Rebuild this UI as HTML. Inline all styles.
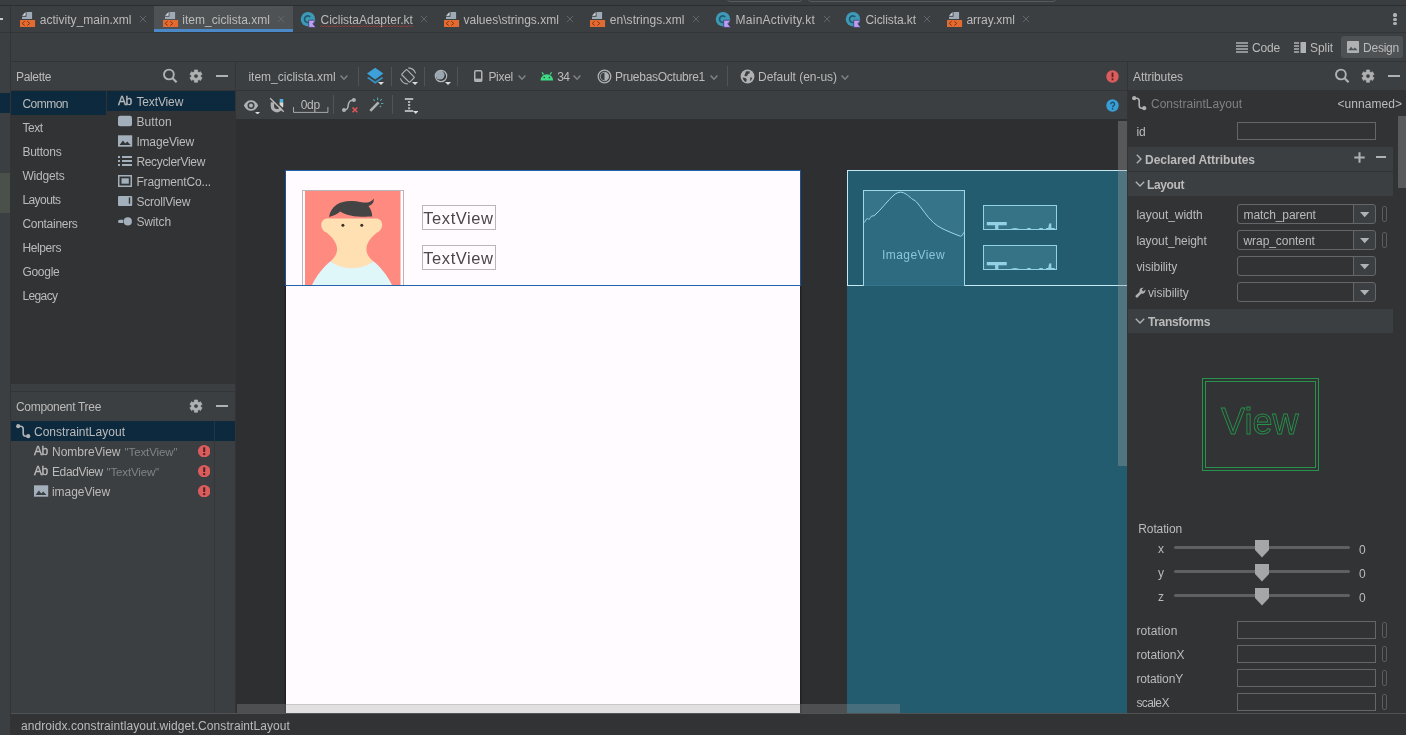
<!DOCTYPE html>
<html lang="en"><head><meta charset="utf-8"><title>item_ciclista.xml</title><style>
html{margin:0;padding:0;background:#3c3f41;}
body{margin:0;padding:0;will-change:transform;}
body{width:1406px;height:735px;position:relative;overflow:hidden;font-family:'Liberation Sans',sans-serif;}
body>div,body>svg,body>span{position:absolute;display:block;}
.t{white-space:pre;}
</style></head><body>
<div style="left:0px;top:0px;width:1406px;height:5px;background:#3a3d3f;"></div>
<div style="left:727px;top:-10px;width:73px;height:10px;border:1px solid #585b5d;background:transparent;border-radius:3px"></div>
<div style="left:808px;top:-10px;width:246px;height:10px;border:1px solid #585b5d;background:transparent;border-radius:3px"></div>
<div style="left:0px;top:5px;width:1406px;height:1px;background:#2b2d2e;"></div>
<div style="left:0px;top:6px;width:1406px;height:26px;background:#3c3f41;"></div>
<div style="left:0px;top:32px;width:1406px;height:1px;background:#323436;"></div>
<div style="left:11px;top:33px;width:1395px;height:28px;background:#3c3f41;"></div>
<div style="left:11px;top:61px;width:1395px;height:1px;background:#323436;"></div>
<div style="left:0px;top:33px;width:10px;height:702px;background:#3c3f41;"></div>
<div style="left:10px;top:6px;width:1px;height:729px;background:#323436;"></div>
<div style="left:0px;top:93px;width:10px;height:20px;background:#0d293e;"></div>
<div style="left:0px;top:173px;width:10px;height:40px;background:#49514a;"></div>
<div style="left:154px;top:6px;width:139px;height:26px;background:#4e5254;"></div>
<div style="left:154px;top:29px;width:139px;height:3px;background:#4a88c7;"></div>
<svg style="left:20px;top:11px;" width="16" height="16" viewBox="0 0 16 16"><path d="M6.500 1.100h5.600V7.900H2V5.700H6.500z" fill="#9eaab5"/><path d="M5.600 1.100v3.700H2z" fill="#d3d8dc"/><rect x="0" y="9" width="15.100" height="7" fill="#e16b30"/><path d="M4.700 10.300L2.200 12.400l2.500 2.100M7.300 10.300l2.500 2.100-2.500 2.100" stroke="#8a2f0d" stroke-width="1" fill="none"/></svg>
<span class="t" style="left:39.8px;top:13.34px;font-size:12px;line-height:15px;color:#bbbbbb;letter-spacing:0.020px;">activity_main.xml</span>
<svg style="left:139px;top:15px;" width="8" height="8" viewBox="0 0 8 8"><path d="M.8 .8l6.4 6.4M7.2 .8L.8 7.2" stroke="#63676a" stroke-width="1" fill="none"/></svg>
<svg style="left:163px;top:11px;" width="16" height="16" viewBox="0 0 16 16"><path d="M6.500 1.100h5.600V7.900H2V5.700H6.500z" fill="#9eaab5"/><path d="M5.600 1.100v3.700H2z" fill="#d3d8dc"/><rect x="0" y="9" width="15.100" height="7" fill="#e16b30"/><path d="M4.700 10.300L2.200 12.400l2.500 2.100M7.300 10.300l2.500 2.100-2.500 2.100" stroke="#8a2f0d" stroke-width="1" fill="none"/></svg>
<span class="t" style="left:182.2px;top:13.34px;font-size:12px;line-height:15px;color:#bbbbbb;letter-spacing:0.026px;">item_ciclista.xml</span>
<svg style="left:277px;top:15px;" width="8" height="8" viewBox="0 0 8 8"><path d="M.8 .8l6.4 6.4M7.2 .8L.8 7.2" stroke="#63676a" stroke-width="1" fill="none"/></svg>
<svg style="left:300px;top:11.6px;" width="17" height="17" viewBox="0 0 17 17"><circle cx="8" cy="7.200" r="7.200" fill="#3e9bb8"/><path d="M10.300 5A3.300 3.300 0 1 0 10.300 9.400" stroke="#215a70" stroke-width="1.700" fill="none"/><path d="M8.700 8.200h7.200l-3.100 3.600 3.100 3.600H8.700z" fill="#bd9cfa" stroke="#343a52" stroke-width=".7"/></svg>
<span class="t" style="left:320.5px;top:13.34px;font-size:12px;line-height:15px;color:#bbbbbb;letter-spacing:-0.018px;">CiclistaAdapter.kt</span>
<svg style="left:420px;top:15px;" width="8" height="8" viewBox="0 0 8 8"><path d="M.8 .8l6.4 6.4M7.2 .8L.8 7.2" stroke="#63676a" stroke-width="1" fill="none"/></svg>
<svg style="left:443.7px;top:11px;" width="16" height="16" viewBox="0 0 16 16"><path d="M6.500 1.100h5.600V7.900H2V5.700H6.500z" fill="#9eaab5"/><path d="M5.600 1.100v3.700H2z" fill="#d3d8dc"/><rect x="0" y="9" width="15.100" height="7" fill="#e16b30"/><path d="M4.700 10.300L2.200 12.400l2.500 2.100M7.300 10.300l2.500 2.100-2.500 2.100" stroke="#8a2f0d" stroke-width="1" fill="none"/></svg>
<span class="t" style="left:463.5px;top:13.34px;font-size:12px;line-height:15px;color:#bbbbbb;letter-spacing:-0.004px;">values\strings.xml</span>
<svg style="left:566px;top:15px;" width="8" height="8" viewBox="0 0 8 8"><path d="M.8 .8l6.4 6.4M7.2 .8L.8 7.2" stroke="#63676a" stroke-width="1" fill="none"/></svg>
<svg style="left:589.5px;top:11px;" width="16" height="16" viewBox="0 0 16 16"><path d="M6.500 1.100h5.600V7.900H2V5.700H6.500z" fill="#9eaab5"/><path d="M5.600 1.100v3.700H2z" fill="#d3d8dc"/><rect x="0" y="9" width="15.100" height="7" fill="#e16b30"/><path d="M4.700 10.300L2.200 12.400l2.500 2.100M7.300 10.300l2.500 2.100-2.500 2.100" stroke="#8a2f0d" stroke-width="1" fill="none"/></svg>
<span class="t" style="left:609.8px;top:13.34px;font-size:12px;line-height:15px;color:#bbbbbb;letter-spacing:0.041px;">en\strings.xml</span>
<svg style="left:692px;top:15px;" width="8" height="8" viewBox="0 0 8 8"><path d="M.8 .8l6.4 6.4M7.2 .8L.8 7.2" stroke="#63676a" stroke-width="1" fill="none"/></svg>
<svg style="left:715px;top:11.6px;" width="17" height="17" viewBox="0 0 17 17"><circle cx="8" cy="7.200" r="7.200" fill="#3e9bb8"/><path d="M10.300 5A3.300 3.300 0 1 0 10.300 9.400" stroke="#215a70" stroke-width="1.700" fill="none"/><path d="M8.700 8.200h7.200l-3.100 3.600 3.100 3.600H8.700z" fill="#bd9cfa" stroke="#343a52" stroke-width=".7"/></svg>
<span class="t" style="left:735.6px;top:13.34px;font-size:12px;line-height:15px;color:#bbbbbb;letter-spacing:0.240px;">MainActivity.kt</span>
<svg style="left:822.5px;top:15px;" width="8" height="8" viewBox="0 0 8 8"><path d="M.8 .8l6.4 6.4M7.2 .8L.8 7.2" stroke="#63676a" stroke-width="1" fill="none"/></svg>
<svg style="left:845px;top:11.6px;" width="17" height="17" viewBox="0 0 17 17"><circle cx="8" cy="7.200" r="7.200" fill="#3e9bb8"/><path d="M10.300 5A3.300 3.300 0 1 0 10.300 9.400" stroke="#215a70" stroke-width="1.700" fill="none"/><path d="M8.700 8.200h7.200l-3.100 3.600 3.100 3.600H8.700z" fill="#bd9cfa" stroke="#343a52" stroke-width=".7"/></svg>
<span class="t" style="left:865.5px;top:13.34px;font-size:12px;line-height:15px;color:#bbbbbb;letter-spacing:-0.077px;">Ciclista.kt</span>
<svg style="left:923px;top:15px;" width="8" height="8" viewBox="0 0 8 8"><path d="M.8 .8l6.4 6.4M7.2 .8L.8 7.2" stroke="#63676a" stroke-width="1" fill="none"/></svg>
<svg style="left:947px;top:11px;" width="16" height="16" viewBox="0 0 16 16"><path d="M6.500 1.100h5.600V7.900H2V5.700H6.500z" fill="#9eaab5"/><path d="M5.600 1.100v3.700H2z" fill="#d3d8dc"/><rect x="0" y="9" width="15.100" height="7" fill="#e16b30"/><path d="M4.700 10.300L2.200 12.400l2.500 2.100M7.300 10.300l2.500 2.100-2.500 2.100" stroke="#8a2f0d" stroke-width="1" fill="none"/></svg>
<span class="t" style="left:966.4px;top:13.34px;font-size:12px;line-height:15px;color:#bbbbbb;letter-spacing:0.016px;">array.xml</span>
<svg style="left:1022px;top:15px;" width="8" height="8" viewBox="0 0 8 8"><path d="M.8 .8l6.4 6.4M7.2 .8L.8 7.2" stroke="#63676a" stroke-width="1" fill="none"/></svg>
<svg style="left:320px;top:25px;" width="94" height="4" viewBox="0 0 94 4"><path d="M0 2 l1.5 -1.5 l1.5 1.5 l1.5 -1.5 l1.5 1.5 l1.5 -1.5 l1.5 1.5 l1.5 -1.5 l1.5 1.5 l1.5 -1.5 l1.5 1.5 l1.5 -1.5 l1.5 1.5 l1.5 -1.5 l1.5 1.5 l1.5 -1.5 l1.5 1.5 l1.5 -1.5 l1.5 1.5 l1.5 -1.5 l1.5 1.5 l1.5 -1.5 l1.5 1.5 l1.5 -1.5 l1.5 1.5 l1.5 -1.5 l1.5 1.5 l1.5 -1.5 l1.5 1.5 l1.5 -1.5 l1.5 1.5 l1.5 -1.5 l1.5 1.5 l1.5 -1.5 l1.5 1.5 l1.5 -1.5 l1.5 1.5 l1.5 -1.5 l1.5 1.5 l1.5 -1.5 l1.5 1.5 l1.5 -1.5 l1.5 1.5 l1.5 -1.5 l1.5 1.5 l1.5 -1.5 l1.5 1.5 l1.5 -1.5 l1.5 1.5 l1.5 -1.5 l1.5 1.5 l1.5 -1.5 l1.5 1.5 l1.5 -1.5 l1.5 1.5 l1.5 -1.5 l1.5 1.5 l1.5 -1.5 l1.5 1.5 l1.5 -1.5 l1.5 1.5 l1.5 -1.5 l1.5 1.5" stroke="#a03c38" stroke-width=".8" fill="none"/></svg>
<div style="left:0px;top:18px;width:3px;height:2px;background:#c8c8c8;"></div>
<div style="left:1393.4px;top:13.4px;width:3.2px;height:3.2px;background:#afb1b3;border-radius:50%"></div>
<div style="left:1393.4px;top:17.85px;width:3.2px;height:3.2px;background:#afb1b3;border-radius:50%"></div>
<div style="left:1393.4px;top:22.3px;width:3.2px;height:3.2px;background:#afb1b3;border-radius:50%"></div>
<div style="left:1341px;top:36px;width:62px;height:22px;background:#4e5254;border-radius:3px"></div>
<svg style="left:1236px;top:42px;" width="13" height="12" viewBox="0 0 13 12"><path d="M0 1h12M0 4h12M0 7h12M0 10h12" stroke="#afb1b3" stroke-width="1.6"/></svg>
<span class="t" style="left:1252px;top:41.34px;font-size:12px;line-height:15px;color:#bbbbbb;letter-spacing:-0.172px;">Code</span>
<svg style="left:1294px;top:42px;" width="12" height="12" viewBox="0 0 12 12"><path d="M0 1h5M0 4h5M0 7h5M0 10h5" stroke="#afb1b3" stroke-width="1.6"/><rect x="6.5" y="0" width="5.5" height="11" fill="#afb1b3"/></svg>
<span class="t" style="left:1310px;top:41.34px;font-size:12px;line-height:15px;color:#bbbbbb;letter-spacing:-0.069px;">Split</span>
<svg style="left:1347px;top:41px;" width="13" height="13" viewBox="0 0 13 13"><rect x="0" y="0" width="12" height="12" rx=".8" fill="#afb1b3"/><path d="M1.300 9.300l2.800-3.600 2 2.500 1.700-1.700 2.900 2.800z" fill="#4e5254"/></svg>
<span class="t" style="left:1363px;top:41.34px;font-size:12px;line-height:15px;color:#bbbbbb;letter-spacing:-0.227px;">Design</span>
<div style="left:11px;top:62px;width:224px;height:28px;background:#3c3f41;"></div>
<div style="left:11px;top:90px;width:224px;height:1px;background:#323436;"></div>
<div style="left:235px;top:62px;width:1px;height:651px;background:#323436;"></div>
<span class="t" style="left:16px;top:70.34px;font-size:12px;line-height:15px;color:#bbbbbb;letter-spacing:-0.337px;">Palette</span>
<svg style="left:162px;top:68px;" width="16" height="16" viewBox="0 0 16 16"><circle cx="6.900" cy="6.500" r="4.900" stroke="#afb1b3" stroke-width="1.900" fill="none"/><path d="M10.400 10l4.200 4.200" stroke="#afb1b3" stroke-width="2.200"/></svg>
<svg style="left:188px;top:68px;" width="16" height="17" viewBox="0 0 16 17"><path d="M6.37 2.01 L9.63 2.01 L9.45 3.63 L11.14 4.61 L12.45 3.65 L14.09 6.47 L12.60 7.12 L12.60 9.08 L14.09 9.73 L12.45 12.55 L11.14 11.59 L9.45 12.57 L9.63 14.19 L6.37 14.19 L6.55 12.57 L4.86 11.59 L3.55 12.55 L1.91 9.73 L3.40 9.08 L3.40 7.12 L1.91 6.47 L3.55 3.65 L4.86 4.61 L6.55 3.63Z M8 5.900a2.200 2.200 0 1 0 .001 0z" fill="#afb1b3" fill-rule="evenodd" stroke="#afb1b3" stroke-width=".7" stroke-linejoin="round"/></svg>
<div style="left:216px;top:74.5px;width:12px;height:2.5px;background:#afb1b3;"></div>
<div style="left:11px;top:91px;width:224px;height:293px;background:#313335;"></div>
<div style="left:11px;top:91px;width:95px;height:23.5px;background:#0d293e;"></div>
<div style="left:107px;top:91px;width:128px;height:20px;background:#0d293e;"></div>
<span class="t" style="left:22.4px;top:97.34px;font-size:12px;line-height:15px;color:#bbbbbb;letter-spacing:-0.515px;">Common</span>
<span class="t" style="left:22.4px;top:121.34px;font-size:12px;line-height:15px;color:#bbbbbb;letter-spacing:-0.404px;">Text</span>
<span class="t" style="left:22.4px;top:145.34px;font-size:12px;line-height:15px;color:#bbbbbb;letter-spacing:-0.229px;">Buttons</span>
<span class="t" style="left:22.4px;top:169.34px;font-size:12px;line-height:15px;color:#bbbbbb;letter-spacing:-0.180px;">Widgets</span>
<span class="t" style="left:22.4px;top:193.34px;font-size:12px;line-height:15px;color:#bbbbbb;letter-spacing:-0.562px;">Layouts</span>
<span class="t" style="left:22.4px;top:217.34px;font-size:12px;line-height:15px;color:#bbbbbb;letter-spacing:-0.283px;">Containers</span>
<span class="t" style="left:22.4px;top:241.34px;font-size:12px;line-height:15px;color:#bbbbbb;letter-spacing:-0.394px;">Helpers</span>
<span class="t" style="left:22.4px;top:265.34px;font-size:12px;line-height:15px;color:#bbbbbb;letter-spacing:-0.267px;">Google</span>
<span class="t" style="left:22.4px;top:289.34px;font-size:12px;line-height:15px;color:#bbbbbb;letter-spacing:-0.600px;">Legacy</span>
<span class="t" style="left:136.4px;top:95.34px;font-size:12px;line-height:15px;color:#bbbbbb;letter-spacing:-0.127px;">TextView</span>
<span class="t" style="left:136.4px;top:115.34px;font-size:12px;line-height:15px;color:#bbbbbb;letter-spacing:0.099px;">Button</span>
<span class="t" style="left:136.4px;top:135.34px;font-size:12px;line-height:15px;color:#bbbbbb;letter-spacing:-0.173px;">ImageView</span>
<span class="t" style="left:136.4px;top:155.34px;font-size:12px;line-height:15px;color:#bbbbbb;letter-spacing:-0.322px;">RecyclerView</span>
<span class="t" style="left:136.4px;top:175.34px;font-size:12px;line-height:15px;color:#bbbbbb;letter-spacing:-0.162px;">FragmentCo...</span>
<span class="t" style="left:136.4px;top:195.34px;font-size:12px;line-height:15px;color:#bbbbbb;letter-spacing:-0.191px;">ScrollView</span>
<span class="t" style="left:136.4px;top:215.34px;font-size:12px;line-height:15px;color:#bbbbbb;letter-spacing:-0.124px;">Switch</span>
<span class="t" style="left:118px;top:94.34px;font-size:12px;line-height:15px;color:#bbbbbb;letter-spacing:-0.444px;-webkit-text-stroke:.35px #bbbbbb;">Ab</span>
<svg style="left:118px;top:115px;" width="14" height="12" viewBox="0 0 14 12"><rect x="0" y=".8" width="14" height="10.400" rx="2" fill="#a3b0bb"/></svg>
<svg style="left:118px;top:135px;" width="15" height="12" viewBox="0 0 15 12"><rect x="0" y=".3" width="14.200" height="11.400" fill="#a3b0bb"/><path d="M1.600 10.100l3.300-4.600 2.400 3 1.900-2 3.400 3.600z" fill="#313335"/></svg>
<svg style="left:118px;top:155px;" width="14" height="12" viewBox="0 0 14 12"><path d="M0 2h2M0 6h2M0 10h2" stroke="#a3b0bb" stroke-width="1.8"/><path d="M4 2h10M4 6h10M4 10h10" stroke="#a3b0bb" stroke-width="1.8"/></svg>
<svg style="left:118px;top:175px;" width="14" height="12" viewBox="0 0 14 12"><rect x=".75" y=".75" width="12.5" height="10.5" fill="none" stroke="#a3b0bb" stroke-width="1.5"/><rect x="3.500" y="3.300" width="7.300" height="5.400" fill="#a3b0bb"/></svg>
<svg style="left:118px;top:195px;" width="15" height="12" viewBox="0 0 15 12"><rect x="0" y="1" width="14.200" height="10" rx="1" fill="#a3b0bb"/><rect x="10.800" y="2.400" width="1.400" height="6.400" fill="#313335"/></svg>
<svg style="left:118px;top:215px;" width="15" height="13" viewBox="0 0 15 13"><rect x="0" y="4.700" width="7" height="3.400" rx="1.700" fill="#a3b0bb"/><circle cx="9.800" cy="6.400" r="4.700" fill="#313335"/><circle cx="9.800" cy="6.400" r="4.100" fill="#a3b0bb"/></svg>
<div style="left:11px;top:384px;width:224px;height:8px;background:#3c3f41;"></div>
<div style="left:11px;top:391px;width:224px;height:1px;background:#323436;"></div>
<div style="left:11px;top:392px;width:224px;height:28px;background:#3c3f41;"></div>
<span class="t" style="left:16px;top:400.34px;font-size:12px;line-height:15px;color:#bbbbbb;letter-spacing:-0.314px;">Component Tree</span>
<svg style="left:188px;top:398px;" width="16" height="17" viewBox="0 0 16 17"><path d="M6.37 2.01 L9.63 2.01 L9.45 3.63 L11.14 4.61 L12.45 3.65 L14.09 6.47 L12.60 7.12 L12.60 9.08 L14.09 9.73 L12.45 12.55 L11.14 11.59 L9.45 12.57 L9.63 14.19 L6.37 14.19 L6.55 12.57 L4.86 11.59 L3.55 12.55 L1.91 9.73 L3.40 9.08 L3.40 7.12 L1.91 6.47 L3.55 3.65 L4.86 4.61 L6.55 3.63Z M8 5.900a2.200 2.200 0 1 0 .001 0z" fill="#afb1b3" fill-rule="evenodd" stroke="#afb1b3" stroke-width=".7" stroke-linejoin="round"/></svg>
<div style="left:216px;top:404.5px;width:12px;height:2.5px;background:#afb1b3;"></div>
<div style="left:11px;top:420px;width:224px;height:293px;background:#3c3f41;"></div>
<div style="left:11px;top:421px;width:224px;height:20px;background:#0d293e;"></div>
<div style="left:214px;top:441px;width:1px;height:272px;background:#343638;"></div>
<div style="left:214px;top:421px;width:1px;height:20px;background:#1d3547;"></div>
<svg style="left:15px;top:423px;" width="16" height="16" viewBox="0 0 16 16"><path d="M3.200 3.200h2.300q2.700 0 2.700 2.700v4.600q0 2.700 2.700 2.700h2" stroke="#afb1b3" stroke-width="1.600" fill="none"/><circle cx="3.200" cy="3.200" r="2.100" fill="#afb1b3"/><circle cx="13.200" cy="13.200" r="2.100" fill="#afb1b3"/></svg>
<span class="t" style="left:34px;top:425.34px;font-size:12px;line-height:15px;color:#bbbbbb;letter-spacing:0.017px;">ConstraintLayout</span>
<span class="t" style="left:34px;top:444.34px;font-size:12px;line-height:15px;color:#bbbbbb;letter-spacing:-0.444px;-webkit-text-stroke:.35px #bbbbbb;">Ab</span>
<span class="t" style="left:52px;top:445.34px;font-size:12px;line-height:15px;color:#bbbbbb;letter-spacing:0.002px;">NombreView</span>
<span class="t" style="left:124.5px;top:445.02px;font-size:11.5px;line-height:14px;color:#808386;letter-spacing:-0.098px;">&quot;TextView&quot;</span>
<span class="t" style="left:34px;top:464.34px;font-size:12px;line-height:15px;color:#bbbbbb;letter-spacing:-0.444px;-webkit-text-stroke:.35px #bbbbbb;">Ab</span>
<span class="t" style="left:52px;top:465.34px;font-size:12px;line-height:15px;color:#bbbbbb;letter-spacing:-0.379px;">EdadView</span>
<span class="t" style="left:106.5px;top:465.02px;font-size:11.5px;line-height:14px;color:#808386;letter-spacing:-0.148px;">&quot;TextView&quot;</span>
<svg style="left:34px;top:485px;" width="15" height="12" viewBox="0 0 15 12"><rect x="0" y=".3" width="14.200" height="11.400" fill="#a3b0bb"/><path d="M1.600 10.100l3.300-4.600 2.400 3 1.900-2 3.400 3.600z" fill="#3c3f41"/></svg>
<span class="t" style="left:52px;top:485.34px;font-size:12px;line-height:15px;color:#bbbbbb;letter-spacing:-0.054px;">imageView</span>
<svg style="left:197.8px;top:445.0px;" width="12.4" height="12.4" viewBox="0 0 12.4 12.4"><circle cx="6.2" cy="6.2" r="6.2" fill="#db5c5c"/><rect x="5.2" y="2.3000000000000003" width="2" height="4.700" fill="#4a2323"/><rect x="5.2" y="8.1" width="2" height="2" fill="#4a2323"/></svg>
<svg style="left:197.8px;top:465.0px;" width="12.4" height="12.4" viewBox="0 0 12.4 12.4"><circle cx="6.2" cy="6.2" r="6.2" fill="#db5c5c"/><rect x="5.2" y="2.3000000000000003" width="2" height="4.700" fill="#4a2323"/><rect x="5.2" y="8.1" width="2" height="2" fill="#4a2323"/></svg>
<svg style="left:197.8px;top:485.0px;" width="12.4" height="12.4" viewBox="0 0 12.4 12.4"><circle cx="6.2" cy="6.2" r="6.2" fill="#db5c5c"/><rect x="5.2" y="2.3000000000000003" width="2" height="4.700" fill="#4a2323"/><rect x="5.2" y="8.1" width="2" height="2" fill="#4a2323"/></svg>
<div style="left:236px;top:62px;width:891px;height:28px;background:#3c3f41;"></div>
<div style="left:236px;top:90px;width:891px;height:1px;background:#323436;"></div>
<div style="left:236px;top:91px;width:891px;height:28px;background:#3c3f41;"></div>
<span class="t" style="left:248.4px;top:70.34px;font-size:12px;line-height:15px;color:#bbbbbb;letter-spacing:0.002px;">item_ciclista.xml</span>
<svg style="left:340px;top:74.6px;" width="8" height="6" viewBox="0 0 8 6"><path d="M.6 .6L4 4.200 7.400 .6" stroke="#808385" stroke-width="1.500" fill="none"/></svg>
<div style="left:358px;top:67px;width:1px;height:19px;background:#515456;"></div>
<div style="left:391px;top:67px;width:1px;height:19px;background:#515456;"></div>
<div style="left:424px;top:67px;width:1px;height:19px;background:#515456;"></div>
<div style="left:457px;top:67px;width:1px;height:19px;background:#515456;"></div>
<svg style="left:366px;top:67px;" width="19" height="19" viewBox="0 0 19 19"><path d="M9.200 5.500L1 11l8.200 5.700L17.400 11z" fill="#3592c4"/><path d="M9.200 2.300L0 8.300l9.200 6.200 9.200-6.200z" fill="#3c3f41"/><path d="M9.200 .8L1 6.600l8.200 5.800 8.200-5.800z" fill="#3ea0d8"/></svg>
<svg style="left:378px;top:82px;" width="6" height="3" viewBox="0 0 6 3"><path d="M0 0h6L3.0 3z" fill="#dcdcdc"/></svg>
<svg style="left:399px;top:67px;" width="19" height="19" viewBox="0 0 19 19"><rect x="3.300" y="5.300" width="11.400" height="7.200" rx=".8" transform="rotate(45 9 8.900)" fill="none" stroke="#afb1b3" stroke-width="1.200"/><path d="M9.28 0.90A8 8 0 0 1 16.61 6.43M8.72 16.90A8 8 0 0 1 1.39 11.37" stroke="#afb1b3" stroke-width="1.100" fill="none"/></svg>
<svg style="left:411.5px;top:82px;" width="6" height="3" viewBox="0 0 6 3"><path d="M0 0h6L3.0 3z" fill="#dcdcdc"/></svg>
<svg style="left:433px;top:68px;" width="17" height="17" viewBox="0 0 17 17"><circle cx="8" cy="8" r="5.700" fill="#34373a" stroke="#b4b8bb" stroke-width="1.200"/><circle cx="7.100" cy="7.100" r="4.500" fill="#9aa7b0"/></svg>
<svg style="left:444.5px;top:82px;" width="6" height="3" viewBox="0 0 6 3"><path d="M0 0h6L3.0 3z" fill="#dcdcdc"/></svg>
<svg style="left:473.7px;top:69.9px;" width="10" height="13" viewBox="0 0 10 13"><rect x=".75" y=".75" width="7" height="10.600" rx="1.200" fill="none" stroke="#afb1b3" stroke-width="1.500"/><rect x="1" y="8.600" width="6.500" height="2.400" fill="#afb1b3"/></svg>
<span class="t" style="left:488.4px;top:70.34px;font-size:12px;line-height:15px;color:#bbbbbb;letter-spacing:-0.283px;">Pixel</span>
<svg style="left:517.5px;top:74.6px;" width="8" height="6" viewBox="0 0 8 6"><path d="M.6 .6L4 4.200 7.400 .6" stroke="#808385" stroke-width="1.500" fill="none"/></svg>
<svg style="left:540px;top:71px;" width="14" height="10" viewBox="0 0 14 10"><path d="M0.5 9.5a6.3 6.3 0 0 1 12.6 0z" fill="#3ddc84"/><path d="M3.500 3.600L2.100 1.200M10.100 3.600L11.500 1.200" stroke="#3ddc84" stroke-width="1.200"/><circle cx="4.2" cy="6.6" r=".8" fill="#3c3f41"/><circle cx="9.4" cy="6.6" r=".8" fill="#3c3f41"/></svg>
<span class="t" style="left:557.3px;top:70.34px;font-size:12px;line-height:15px;color:#bbbbbb;letter-spacing:-0.600px;">34</span>
<svg style="left:573px;top:74.6px;" width="8" height="6" viewBox="0 0 8 6"><path d="M.6 .6L4 4.200 7.400 .6" stroke="#808385" stroke-width="1.500" fill="none"/></svg>
<svg style="left:597.4px;top:68.5px;" width="15" height="15" viewBox="0 0 15 15"><circle cx="7.5" cy="7.5" r="6.3" fill="none" stroke="#afb1b3" stroke-width="1.3"/><path d="M7.500 3.300a4.200 4.200 0 0 1 0 8.400z" fill="#afb1b3"/><circle cx="7.5" cy="7.5" r="4.2" fill="none" stroke="#afb1b3" stroke-width=".8"/></svg>
<span class="t" style="left:615px;top:70.34px;font-size:12px;line-height:15px;color:#bbbbbb;letter-spacing:-0.271px;">PruebasOctubre1</span>
<svg style="left:710px;top:74.6px;" width="8" height="6" viewBox="0 0 8 6"><path d="M.6 .6L4 4.200 7.400 .6" stroke="#808385" stroke-width="1.500" fill="none"/></svg>
<div style="left:727px;top:66px;width:1px;height:20px;background:#515456;"></div>
<svg style="left:740.3px;top:68.5px;" width="15" height="15" viewBox="0 0 15 15"><circle cx="7.500" cy="7.500" r="6.900" fill="#afb1b3"/><path d="M5.800 2.600c1.300-.6 2.800-.6 4 0l-.3 1.900-1.600.6-.4 1.500-1.700.9-1.600-1.200.9-1.300zM2.600 8.400l2.900.7 1.300 1.400-.7 2.500C4.200 12.300 2.900 10.500 2.600 8.400zM10.300 8.300l1.900.4c-.3 1.400-1 2.500-2.100 3.300z" fill="#3c3f41"/></svg>
<span class="t" style="left:758px;top:70.34px;font-size:12px;line-height:15px;color:#bbbbbb;letter-spacing:-0.025px;">Default (en-us)</span>
<svg style="left:841px;top:74.6px;" width="8" height="6" viewBox="0 0 8 6"><path d="M.6 .6L4 4.200 7.400 .6" stroke="#808385" stroke-width="1.500" fill="none"/></svg>
<svg style="left:1105.5px;top:69.5px;" width="13" height="13" viewBox="0 0 13 13"><circle cx="6.5" cy="6.5" r="6.2" fill="#db5c5c"/><rect x="5.6" y="2.6" width="1.8" height="4.6" fill="#5a1f1f"/><rect x="5.6" y="8.4" width="1.8" height="1.9" fill="#5a1f1f"/></svg>
<svg style="left:1105.5px;top:98.5px;" width="13" height="13" viewBox="0 0 13 13"><circle cx="6.5" cy="6.5" r="6.2" fill="#389fd6"/><path d="M4.7 5.2a1.9 1.9 0 1 1 2.700 1.700c-.6.300-.8.600-.8 1.300" stroke="#1d4d69" stroke-width="1.3" fill="none"/><rect x="5.900" y="9.100" width="1.400" height="1.400" fill="#1d4d69"/></svg>
<svg style="left:243px;top:99px;" width="17" height="13" viewBox="0 0 17 13"><path d="M.8 6.500C2.500 3 5 1.300 8 1.300S13.500 3 15.200 6.500C13.500 10 11 11.700 8 11.700S2.500 10 .8 6.500z" fill="#afb1b3"/><circle cx="8" cy="6.500" r="3.500" fill="#3c3f41"/><circle cx="8" cy="6.500" r="2" fill="#afb1b3"/></svg>
<svg style="left:254.5px;top:111.5px;" width="5" height="2.5" viewBox="0 0 5 2.5"><path d="M0 0h5L2.5 2.5z" fill="#dcdcdc"/></svg>
<svg style="left:269px;top:97px;" width="16" height="16" viewBox="0 0 16 16"><path d="M3.400 5.200v4a4.500 4.500 0 0 0 9 0v-4" stroke="#afb1b3" stroke-width="3.400" fill="none"/><rect x="10.700" y="2" width="3.500" height="3.500" fill="#40b6e0"/><rect x="10.700" y="5.500" width="3.500" height="4.300" fill="#d9d9d2"/><path d="M2.300 .3l13.500 13.500" stroke="#3c3f41" stroke-width="1.300"/><path d="M1.200 1.200l13.500 13.500" stroke="#b8babc" stroke-width="1.400"/></svg>
<span class="t" style="left:300.8px;top:98.34px;font-size:12px;line-height:15px;color:#bbbbbb;letter-spacing:-0.377px;">0dp</span>
<svg style="left:293px;top:107px;" width="36" height="7" viewBox="0 0 36 7"><path d="M.5 0v5.400h34.400V0" stroke="#a6a8aa" stroke-width="1" fill="none"/></svg>
<div style="left:333px;top:95px;width:1px;height:19px;background:#515456;"></div>
<svg style="left:341px;top:97px;" width="18" height="16" viewBox="0 0 18 16"><path d="M3 12.900c5 0 3.600-3.500 4.600-6.500S10 3 12.900 3" stroke="#afb1b3" stroke-width="1.500" fill="none"/><circle cx="3" cy="12.900" r="2" fill="#afb1b3"/><circle cx="12.900" cy="3" r="2" fill="#afb1b3"/><path d="M11.500 10.500l4.800 4.800M16.300 10.500l-4.800 4.800" stroke="#e0555a" stroke-width="1.600"/></svg>
<svg style="left:368px;top:96px;" width="17" height="17" viewBox="0 0 17 17"><path d="M2.300 14.900L10.600 6.300" stroke="#afb1b3" stroke-width="2.600"/><path d="M9.600 1.500v2.400M13.700 3.200l-1.500 1.500M15.300 7.500h-2.300M13.200 11.200l-1.400-1.400M5.300 3.300l1.500 1.500" stroke="#4fa9b4" stroke-width="1.100"/></svg>
<div style="left:392px;top:95px;width:1px;height:19px;background:#515456;"></div>
<svg style="left:404px;top:97px;" width="14" height="16" viewBox="0 0 14 16"><path d="M.8 2h8.400M.8 14h8.400" stroke="#afb1b3" stroke-width="1.900"/><path d="M5.100 4v8.500" stroke="#afb1b3" stroke-width="2.200" stroke-dasharray="2 1.100"/></svg>
<svg style="left:412.5px;top:111px;" width="5.5" height="3" viewBox="0 0 5.5 3"><path d="M0 0h5.5L2.75 3z" fill="#dcdcdc"/></svg>
<div style="left:236px;top:119px;width:891px;height:594px;background:#2d2f31;"></div>
<div style="left:286px;top:170px;width:514px;height:543px;background:#fffbfe;"></div>
<div style="left:284px;top:286px;width:1px;height:427px;background:#292a2c;"></div>
<div style="left:285px;top:286px;width:1px;height:427px;background:#1f2021;"></div>
<div style="left:800px;top:286px;width:1px;height:427px;background:#1f2021;"></div>
<div style="left:801px;top:286px;width:1px;height:427px;background:#292a2c;"></div>
<div style="left:302px;top:190px;width:100px;height:94px;border:1px solid #b9b6ba;background:#fffbfe;border-bottom:none;height:95px"></div>
<svg style="left:305px;top:191px;" width="96" height="94" viewBox="0 0 96 94"><rect width="95.500" height="94" fill="#ff8a80"/><path d="M26 70C30 66 32.500 62 32 57 31.500 51 27 46 21.500 41.500 14.500 39 14.500 28 22 27.500L71.500 27.500C79 28 79 39 72 41.500 66.500 46 62 51 61.500 57 61 62 63.500 66 68 70 60 82 34 82 26 70z" fill="#ffe0b2"/><path d="M7 94C12 84 19 75 26 70 34 79.500 60 79.500 68 70 75 75 82 84 87 94z" fill="#e0f7fa"/><path d="M24 26C26 14 36 9.500 47 10 54 10.300 59 12 62.500 11.500 65.500 11 67.500 9.500 68.600 7.500 69.500 11 67 14 63.500 15 66 18 67.200 22 67.200 25.500 60 25.800 55 25.600 51.600 25.400 45 25 39 23 35.300 20.500 32.500 23 28.500 25 24 26z" fill="#444444"/><circle cx="37.900" cy="34.300" r="1.500" fill="#3e2f25"/><circle cx="56.800" cy="34.300" r="1.500" fill="#3e2f25"/></svg>
<div style="left:422px;top:205px;width:72px;height:23px;border:1px solid #b9b6ba;background:#fffbfe;"></div>
<span class="t" style="left:423.3px;top:208.08px;font-size:16.5px;line-height:21px;color:#4a474c;letter-spacing:0.571px;">TextView</span>
<div style="left:422px;top:245px;width:72px;height:23px;border:1px solid #b9b6ba;background:#fffbfe;"></div>
<span class="t" style="left:423.3px;top:248.08px;font-size:16.5px;line-height:21px;color:#4a474c;letter-spacing:0.571px;">TextView</span>
<div style="left:285px;top:170px;width:514px;height:114px;border:1px solid #2463ad;background:transparent;border-left-color:#1c4f94;border-right-color:#1c4f94"></div>
<div style="left:847px;top:170px;width:280px;height:543px;background:#235b6f;"></div>
<div style="left:847px;top:170px;width:280px;height:1px;background:#c5e9f4;"></div>
<div style="left:847px;top:170px;width:1px;height:116px;background:#c5e9f4;"></div>
<div style="left:847px;top:285px;width:280px;height:1px;background:#c5e9f4;"></div>
<div style="left:863px;top:190px;width:100px;height:94px;border:1px solid #9fd6e8;background:#36748a;border-bottom:none;height:95px"></div>
<svg style="left:864px;top:191px;" width="100" height="94" viewBox="0 0 100 94"><path d="M0 31.700c1.500-1 1.500-3.500 3.300-4 1-.3 1 .9 2 .4 1.200-.6 1.300-2.700 2.800-3.200.9-.3 1 .5 1.900 0C17 19 24 9 30 4c2.500-2 4.500-2.800 6.500-2.800 4 0 7.500 3.300 11 6.300 2 1.700 3 1.300 5 3.500 5.500 6 10 14.500 17 20.700 5 4.500 10 6.500 15.500 9 4 1.800 8 3.200 11.500 4.600 1.500 0 2.300-2 3.500-4V94H0z" fill="#2e6a80"/><path d="M0 31.700c1.500-1 1.500-3.500 3.300-4 1-.3 1 .9 2 .4 1.200-.6 1.300-2.700 2.800-3.200.9-.3 1 .5 1.900 0C17 19 24 9 30 4c2.500-2 4.500-2.800 6.500-2.800 4 0 7.500 3.300 11 6.300 2 1.700 3 1.300 5 3.500 5.500 6 10 14.500 17 20.700 5 4.500 10 6.500 15.500 9 4 1.800 8 3.200 11.500 4.600 1.500 0 2.300-2 3.500-4" stroke="#9fd6e8" stroke-width="1" fill="none"/></svg>
<span class="t" style="left:882px;top:248.34px;font-size:12px;line-height:15px;color:#8cc5d9;letter-spacing:0.427px;">ImageView</span>
<div style="left:983px;top:205px;width:72px;height:23px;border:1px solid #93d2e6;background:#377387;"></div>
<div style="left:984px;top:206px;width:72px;height:23px;overflow:hidden"><span style="position:absolute;left:2.200px;top:7.600px;font-size:40px;line-height:44px;letter-spacing:1.800px;transform:scaleX(.88);transform-origin:0 0;color:#93d2e6;white-space:pre">TextView</span></div>
<div style="left:983px;top:245px;width:72px;height:23px;border:1px solid #93d2e6;background:#377387;"></div>
<div style="left:984px;top:246px;width:72px;height:23px;overflow:hidden"><span style="position:absolute;left:2.200px;top:7.600px;font-size:40px;line-height:44px;letter-spacing:1.800px;transform:scaleX(.88);transform-origin:0 0;color:#93d2e6;white-space:pre">TextView</span></div>
<div style="left:1118px;top:121px;width:9px;height:345px;background:rgba(159,159,159,.37);"></div>
<div style="left:237px;top:704px;width:663px;height:9px;background:rgba(159,159,159,.29);"></div>
<div style="left:286px;top:704px;width:514px;height:1px;background:#c9c7c9;"></div>
<div style="left:1127px;top:62px;width:1px;height:651px;background:#323436;"></div>
<div style="left:1128px;top:62px;width:278px;height:28px;background:#3c3f41;"></div>
<div style="left:1128px;top:90px;width:278px;height:623px;background:#313335;"></div>
<span class="t" style="left:1133px;top:70.34px;font-size:12px;line-height:15px;color:#bbbbbb;letter-spacing:-0.070px;">Attributes</span>
<svg style="left:1334px;top:68px;" width="16" height="16" viewBox="0 0 16 16"><circle cx="6.900" cy="6.500" r="4.900" stroke="#afb1b3" stroke-width="1.900" fill="none"/><path d="M10.400 10l4.200 4.200" stroke="#afb1b3" stroke-width="2.200"/></svg>
<svg style="left:1360px;top:68px;" width="16" height="17" viewBox="0 0 16 17"><path d="M6.37 2.01 L9.63 2.01 L9.45 3.63 L11.14 4.61 L12.45 3.65 L14.09 6.47 L12.60 7.12 L12.60 9.08 L14.09 9.73 L12.45 12.55 L11.14 11.59 L9.45 12.57 L9.63 14.19 L6.37 14.19 L6.55 12.57 L4.86 11.59 L3.55 12.55 L1.91 9.73 L3.40 9.08 L3.40 7.12 L1.91 6.47 L3.55 3.65 L4.86 4.61 L6.55 3.63Z M8 5.900a2.200 2.200 0 1 0 .001 0z" fill="#afb1b3" fill-rule="evenodd" stroke="#afb1b3" stroke-width=".7" stroke-linejoin="round"/></svg>
<div style="left:1388px;top:74.5px;width:12px;height:2.5px;background:#afb1b3;"></div>
<svg style="left:1131px;top:95px;" width="16" height="16" viewBox="0 0 16 16"><path d="M3.200 3.200h2.300q2.700 0 2.700 2.700v4.600q0 2.700 2.700 2.700h2" stroke="#afb1b3" stroke-width="1.600" fill="none"/><circle cx="3.200" cy="3.200" r="2.100" fill="#afb1b3"/><circle cx="13.200" cy="13.200" r="2.100" fill="#afb1b3"/></svg>
<span class="t" style="left:1151px;top:97.34px;font-size:12px;line-height:15px;color:#7f8284;letter-spacing:0.017px;">ConstraintLayout</span>
<span class="t" style="left:1337.5px;top:97.34px;font-size:12px;line-height:15px;color:#bbbbbb;letter-spacing:0.049px;">&lt;unnamed&gt;</span>
<span class="t" style="left:1136.4px;top:125.34px;font-size:12px;line-height:15px;color:#bbbbbb;">id</span>
<div style="left:1237px;top:122px;width:137px;height:16px;border:1px solid #646669;background:#313335;"></div>
<div style="left:1128px;top:147px;width:265px;height:24px;background:#3c3f41;"></div>
<svg style="left:1136px;top:154px;" width="6" height="10" viewBox="0 0 6 10"><path d="M.8 .8L5 5 .8 9.200" stroke="#afb1b3" stroke-width="1.400" fill="none"/></svg>
<span class="t" style="left:1145px;top:152.84px;font-size:12px;line-height:15px;color:#bbbbbb;font-weight:700;letter-spacing:-0.013px;">Declared Attributes</span>
<svg style="left:1353.5px;top:152px;" width="11" height="11" viewBox="0 0 11 11"><path d="M5.500 .3v10.400M.3 5.500h10.400" stroke="#afb1b3" stroke-width="2"/></svg>
<div style="left:1376px;top:156.3px;width:10px;height:2px;background:#afb1b3;"></div>
<div style="left:1128px;top:172px;width:265px;height:24px;background:#3c3f41;"></div>
<svg style="left:1134.5px;top:181px;" width="10" height="6" viewBox="0 0 10 6"><path d="M.8 .8L5 5 9.200 .8" stroke="#afb1b3" stroke-width="1.400" fill="none"/></svg>
<span class="t" style="left:1147px;top:178.34px;font-size:12px;line-height:15px;color:#bbbbbb;font-weight:700;letter-spacing:-0.391px;">Layout</span>
<span class="t" style="left:1136.4px;top:207.84px;font-size:12px;line-height:15px;color:#bbbbbb;letter-spacing:-0.035px;">layout_width</span>
<div style="left:1237px;top:204px;width:137px;height:18px;border:1px solid #646669;border-radius:3px;background:linear-gradient(to right,#313335 0,#313335 115px,#646669 115px,#646669 116px,#3c3f41 116px)"></div>
<svg style="left:1360px;top:212px;" width="10" height="6" viewBox="0 0 10 6"><path d="M0 0h9.400L4.700 5.200z" fill="#afb1b3"/></svg>
<span class="t" style="left:1243.5px;top:207.84px;font-size:12px;line-height:15px;color:#bbbbbb;letter-spacing:-0.091px;">match_parent</span>
<div style="left:1382px;top:206px;width:3px;height:14px;border:1px solid #5a5d5f;background:transparent;border-radius:2px"></div>
<span class="t" style="left:1136.4px;top:233.84px;font-size:12px;line-height:15px;color:#bbbbbb;letter-spacing:-0.084px;">layout_height</span>
<div style="left:1237px;top:230px;width:137px;height:18px;border:1px solid #646669;border-radius:3px;background:linear-gradient(to right,#313335 0,#313335 115px,#646669 115px,#646669 116px,#3c3f41 116px)"></div>
<svg style="left:1360px;top:238px;" width="10" height="6" viewBox="0 0 10 6"><path d="M0 0h9.400L4.700 5.200z" fill="#afb1b3"/></svg>
<span class="t" style="left:1243.5px;top:233.84px;font-size:12px;line-height:15px;color:#bbbbbb;letter-spacing:-0.062px;">wrap_content</span>
<div style="left:1382px;top:232px;width:3px;height:14px;border:1px solid #5a5d5f;background:transparent;border-radius:2px"></div>
<span class="t" style="left:1136.4px;top:259.84px;font-size:12px;line-height:15px;color:#bbbbbb;letter-spacing:-0.054px;">visibility</span>
<div style="left:1237px;top:256px;width:137px;height:18px;border:1px solid #646669;border-radius:3px;background:linear-gradient(to right,#313335 0,#313335 115px,#646669 115px,#646669 116px,#3c3f41 116px)"></div>
<svg style="left:1360px;top:264px;" width="10" height="6" viewBox="0 0 10 6"><path d="M0 0h9.400L4.700 5.200z" fill="#afb1b3"/></svg>
<svg style="left:1135px;top:287px;" width="11" height="11" viewBox="0 0 11 11"><path d="M10.300 2.600L8.400 4.500 6.600 2.700 8.500 .8A3.100 3.100 0 0 0 4.600 4.700L.7 8.600a1.300 1.300 0 0 0 1.800 1.800L6.400 6.500A3.100 3.100 0 0 0 10.300 2.600z" fill="#afb1b3"/></svg>
<span class="t" style="left:1147.9px;top:285.84px;font-size:12px;line-height:15px;color:#bbbbbb;letter-spacing:-0.054px;">visibility</span>
<div style="left:1237px;top:282px;width:137px;height:18px;border:1px solid #646669;border-radius:3px;background:linear-gradient(to right,#313335 0,#313335 115px,#646669 115px,#646669 116px,#3c3f41 116px)"></div>
<svg style="left:1360px;top:290px;" width="10" height="6" viewBox="0 0 10 6"><path d="M0 0h9.400L4.700 5.200z" fill="#afb1b3"/></svg>
<div style="left:1128px;top:309px;width:265px;height:24px;background:#3c3f41;"></div>
<svg style="left:1134.5px;top:318px;" width="10" height="6" viewBox="0 0 10 6"><path d="M.8 .8L5 5 9.200 .8" stroke="#afb1b3" stroke-width="1.400" fill="none"/></svg>
<span class="t" style="left:1147.9px;top:315.34px;font-size:12px;line-height:15px;color:#bbbbbb;font-weight:700;letter-spacing:-0.326px;">Transforms</span>
<div style="left:1202px;top:378px;width:115px;height:91px;border:1px solid #25934a;background:transparent;"></div>
<div style="left:1205px;top:381px;width:109px;height:85px;border:1px solid #25934a;background:transparent;"></div>
<svg style="left:1210px;top:395px" width="100" height="50" viewBox="0 0 100 50"><text x="11" y="38.800" font-family="Liberation Sans, sans-serif" font-size="37.500" textLength="77.500" lengthAdjust="spacingAndGlyphs" fill="none" stroke="#25934a" stroke-width=".9">View</text></svg>
<span class="t" style="left:1138.3px;top:522.34px;font-size:12px;line-height:15px;color:#bbbbbb;letter-spacing:-0.125px;">Rotation</span>
<span class="t" style="left:1158px;top:542.34px;font-size:12px;line-height:15px;color:#bbbbbb;">x</span>
<div style="left:1174px;top:546px;width:176px;height:3px;background:#5e6162;border-radius:1.5px"></div>
<svg style="left:1255px;top:540px;" width="14" height="18" viewBox="0 0 14 18"><path d="M0 0h14v10L7 17.500 0 10z" fill="#a4a6a8"/></svg>
<span class="t" style="left:1359px;top:542.84px;font-size:12px;line-height:15px;color:#bbbbbb;">0</span>
<span class="t" style="left:1158px;top:566.34px;font-size:12px;line-height:15px;color:#bbbbbb;">y</span>
<div style="left:1174px;top:570px;width:176px;height:3px;background:#5e6162;border-radius:1.5px"></div>
<svg style="left:1255px;top:564px;" width="14" height="18" viewBox="0 0 14 18"><path d="M0 0h14v10L7 17.500 0 10z" fill="#a4a6a8"/></svg>
<span class="t" style="left:1359px;top:566.84px;font-size:12px;line-height:15px;color:#bbbbbb;">0</span>
<span class="t" style="left:1158px;top:590.34px;font-size:12px;line-height:15px;color:#bbbbbb;">z</span>
<div style="left:1174px;top:594px;width:176px;height:3px;background:#5e6162;border-radius:1.5px"></div>
<svg style="left:1255px;top:588px;" width="14" height="18" viewBox="0 0 14 18"><path d="M0 0h14v10L7 17.500 0 10z" fill="#a4a6a8"/></svg>
<span class="t" style="left:1359px;top:590.84px;font-size:12px;line-height:15px;color:#bbbbbb;">0</span>
<span class="t" style="left:1136.4px;top:623.84px;font-size:12px;line-height:15px;color:#bbbbbb;letter-spacing:0.134px;">rotation</span>
<div style="left:1237px;top:621px;width:137px;height:16px;border:1px solid #646669;background:#313335;"></div>
<div style="left:1382px;top:622px;width:3px;height:14px;border:1px solid #5a5d5f;background:transparent;border-radius:2px"></div>
<span class="t" style="left:1136.4px;top:647.84px;font-size:12px;line-height:15px;color:#bbbbbb;letter-spacing:0.008px;">rotationX</span>
<div style="left:1237px;top:645px;width:137px;height:16px;border:1px solid #646669;background:#313335;"></div>
<div style="left:1382px;top:646px;width:3px;height:14px;border:1px solid #5a5d5f;background:transparent;border-radius:2px"></div>
<span class="t" style="left:1136.4px;top:671.84px;font-size:12px;line-height:15px;color:#bbbbbb;letter-spacing:-0.159px;">rotationY</span>
<div style="left:1237px;top:669px;width:137px;height:16px;border:1px solid #646669;background:#313335;"></div>
<div style="left:1382px;top:670px;width:3px;height:14px;border:1px solid #5a5d5f;background:transparent;border-radius:2px"></div>
<span class="t" style="left:1136.4px;top:695.84px;font-size:12px;line-height:15px;color:#bbbbbb;letter-spacing:-0.600px;">scaleX</span>
<div style="left:1237px;top:693px;width:137px;height:16px;border:1px solid #646669;background:#313335;"></div>
<div style="left:1382px;top:694px;width:3px;height:14px;border:1px solid #5a5d5f;background:transparent;border-radius:2px"></div>
<div style="left:1398px;top:116px;width:8px;height:72px;background:#585a5c;"></div>
<div style="left:11px;top:713px;width:1395px;height:22px;background:#313335;"></div>
<div style="left:11px;top:713px;width:1395px;height:1px;background:#515456;"></div>
<span class="t" style="left:21px;top:719.34px;font-size:12px;line-height:15px;color:#bbbbbb;letter-spacing:0.071px;">androidx.constraintlayout.widget.ConstraintLayout</span>
</body></html>
